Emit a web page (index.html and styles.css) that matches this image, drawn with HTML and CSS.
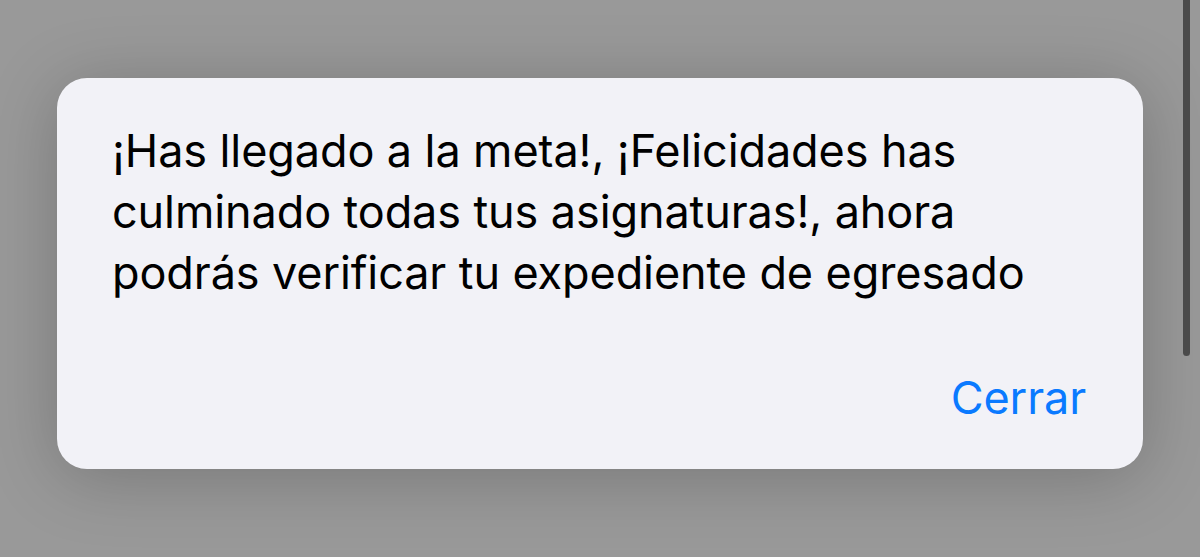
FILE: index.html
```html
<!DOCTYPE html>
<html lang="es">
<head>
<meta charset="utf-8">
<link rel="stylesheet" href="styles.css">
</head>
<body>
<div class="screen">
  <div class="alert">
    <p class="message">¡Has llegado a la meta!, ¡Felicidades has culminado todas tus asignaturas!, ahora podrás verificar tu expediente de egresado</p>
    <div class="actions">
      <span class="btn">Cerrar</span>
    </div>
  </div>
  <div class="scrollbar"></div>
</div>
</body>
</html>
```
FILE: styles.css
```css
html, body {
  margin: 0;
  padding: 0;
}
body {
  width: 1200px;
  height: 557px;
  overflow: hidden;
  background: #999999;
  font-family: Inter, "Noto Sans", sans-serif;
}
.screen {
  position: relative;
  width: 1200px;
  height: 557px;
  padding: 78px 0 0 57px;
  box-sizing: border-box;
}
.alert {
  width: 1086px;
  height: 391px;
  box-sizing: border-box;
  background: #f2f2f7;
  border-radius: 30px;
  box-shadow: 0 8px 70px rgba(0, 0, 0, 0.22);
  padding: 42px 55px 0 55px;
  display: flex;
  flex-direction: column;
}
.message {
  margin: 0;
  font-size: 45px;
  line-height: 61px;
  color: #000;
  letter-spacing: -0.1px;
  width: 960px;
}
.actions {
  display: flex;
  justify-content: flex-end;
  padding-top: 65px;
  padding-right: 2px;
}
.btn {
  font-size: 45px;
  line-height: 60px;
  color: #0a7aff;
  letter-spacing: -0.1px;
}
.scrollbar {
  position: absolute;
  left: 1183px;
  top: 0;
  width: 7px;
  height: 356px;
  background: #4a4a4a;
  border-radius: 0 0 4px 4px;
}
```
